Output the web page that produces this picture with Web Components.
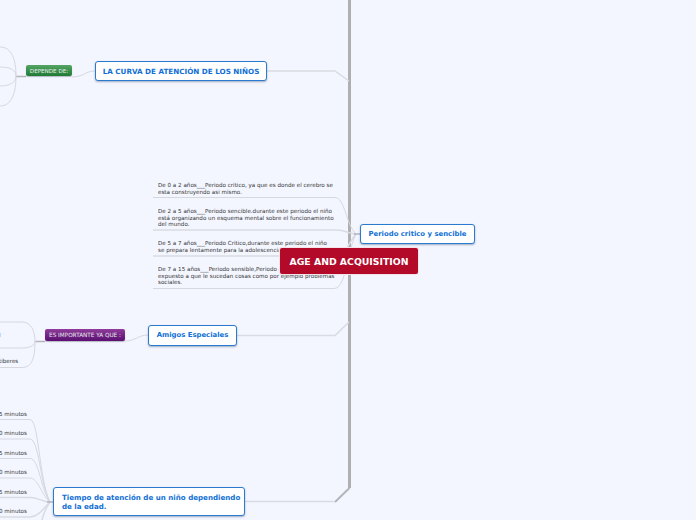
<!DOCTYPE html>
<html lang="es">
<head>
<meta charset="utf-8">
<title>Age and acquisition</title>
<style>
    html, body {
        margin: 0;
        height: 100%;
        overflow: hidden;
        background: #f3f6ff;
    }
</style>
</head>
<body>
<mind-map>
    <map-leaf x="158" y="182">De 0 a 2 años___Periodo critico, ya que es donde el cerebro se<br>esta construyendo asi mismo.</map-leaf>
    <map-leaf x="158" y="208">De 2 a 5 años___Periodo sencible.durante este periodo el niño<br>está organizando un esquema mental sobre el funcionamiento<br>del mundo.</map-leaf>
    <map-leaf x="158" y="240">De 5 a 7 años___Periodo Critico,durante este periodo el niño<br>se prepara lentamente para la adolescencia.</map-leaf>
    <map-leaf x="158" y="266">De 7 a 15 años___Periodo sensible,Periodo en el que el niño esta<br>expuesto a que le sucedan cosas como por ejemplo problemas<br>sociales.</map-leaf>

    <map-leaf x="-1" y="332">l</map-leaf>
    <map-leaf x="-1" y="358">tiberes</map-leaf>
    <map-leaf x="-1" y="411">5 minutos</map-leaf>
    <map-leaf x="-1" y="430">0 minutos</map-leaf>
    <map-leaf x="-1" y="450">5 minutos</map-leaf>
    <map-leaf x="-1" y="469">0 minutos</map-leaf>
    <map-leaf x="-1" y="489">5 minutos</map-leaf>
    <map-leaf x="-1" y="508">0 minutos</map-leaf>

    <map-topic x="95" y="61" w="172" h="20" size="7.2">LA CURVA DE ATENCIÓN DE LOS NIÑOS</map-topic>
    <map-topic x="360" y="224" w="115" h="20" size="6.9">Periodo critico y sencible</map-topic>
    <map-topic x="148" y="325" w="89" h="21" size="6.9">Amigos Especiales</map-topic>
    <map-topic x="53" y="487" w="192" h="29" size="7.1" align="left">Tiempo de atención de un niño dependiendo<br>de la edad.</map-topic>

    <map-tag x="26" y="65" w="46" h="11" size="5.6" color="green">DEPENDE DE:</map-tag>
    <map-tag x="45" y="329" w="80" h="12" size="5.7" color="purple">ES IMPORTANTE YA QUE :</map-tag>

    <map-root x="280" y="248" w="138" h="26">AGE AND ACQUISITION</map-root>
</mind-map>

<script>
    // shared by the nodes: place the host on the canvas from its attributes
    class MapNode extends HTMLElement {
        place() {
            this.style.left = this.getAttribute('x') + 'px';
            this.style.top = this.getAttribute('y') + 'px';
            if (this.hasAttribute('w')) {
                this.style.width = this.getAttribute('w') + 'px';
            }
            if (this.hasAttribute('h')) {
                this.style.height = this.getAttribute('h') + 'px';
            }
        }
    }

    class MindMap extends HTMLElement {
        connectedCallback() {
            this.attachShadow({ mode: 'open' });

            this.shadowRoot.innerHTML = `
                <style>
                    :host {
                        display: block;
                        position: relative;
                        width: 696px;
                        height: 520px;
                        overflow: hidden;
                        background: #f3f6ff;
                        font-family: 'DejaVu Sans', Verdana, sans-serif;
                    }

                    svg {
                        position: absolute;
                        left: 0;
                        top: 0;
                    }

                    .thin {
                        fill: none;
                        stroke: #d6d8e0;
                        stroke-width: 1;
                    }

                    .mid {
                        fill: none;
                        stroke: #d9dbe2;
                        stroke-width: 1.5;
                    }

                    .stub {
                        fill: none;
                        stroke: #b4b5ba;
                        stroke-width: 1.5;
                    }

                    .trunk {
                        fill: none;
                        stroke: #afafb2;
                        stroke-width: 3;
                    }
                </style>

                <svg width="696" height="520" viewBox="0 0 696 520">
                    <!-- trunk -->
                    <path class="trunk" d="M349.5 0 V488"/>
                    <path class="stub" style="stroke-width: 2" d="M349.5 488 L335 502"/>
                    <path class="mid" d="M267 71 H335 L349 81"/>
                    <path class="mid" d="M237 335.500 H335 L349 322"/>
                    <path class="mid" d="M245 501.500 H335"/>

                    <!-- curva branch -->
                    <path class="thin" d="M72 77 C84 77 85 71 95 71"/>
                    <path class="stub" d="M16 76.500 H26"/>
                    <path class="thin" d="M0 47 C12 47 16 60 16 76 M0 67 C10 67 16 70 16 76 M0 86 C10 86 16 82 16 76 M0 106 C12 106 16 92 16 76"/>

                    <!-- periodo branch -->
                    <path class="thin" d="M153 197.500 H335 C345 197.500 346 225 356 234"/>
                    <path class="mid" d="M153 230 H336 C346 230 349 234 356 234"/>
                    <path class="mid" d="M153 256 H336 C346 256 350 240 356 234"/>
                    <path class="thin" d="M153 288.500 H334 C346 288.500 346 255 356 234"/>
                    <path class="stub" d="M354 234 H360"/>

                    <!-- amigos branch -->
                    <path class="thin" d="M125 341 C136 341 138 335 148 335"/>
                    <path class="stub" d="M35 341.500 H45"/>
                    <path class="thin" d="M0 322 H22 C31 322 35 331 35 341 C35 345 31 348 22 348 H0 M35 341 C35 358 32 367.500 22 367.500 H0"/>

                    <!-- tiempo branch -->
                    <path class="thin" d="M0 419.500 H30 C39 419.500 39 480 50 502"/>
                    <path class="thin" d="M0 439 H30 C39 439 40 484 50 502"/>
                    <path class="thin" d="M0 458.500 H30 C39 458.500 41 490 50 502"/>
                    <path class="thin" d="M0 478 H30 C38 478 42 496 50 502"/>
                    <path class="mid" d="M0 497.500 H30 C38 497.500 43 502 50 502"/>
                    <path class="mid" d="M0 517 H30 C38 517 44 508 50 502"/>
                    <path class="mid" d="M42 520 C44 512 47 506 50 502"/>
                    <path class="stub" d="M47 502 H53"/>
                </svg>

                <slot></slot>
            `;
        }
    }

    class MapRoot extends MapNode {
        connectedCallback() {
            this.attachShadow({ mode: 'open' });
            this.place();

            this.shadowRoot.innerHTML = `
                <style>
                    :host {
                        display: flex;
                        position: absolute;
                        align-items: center;
                        justify-content: center;
                        box-sizing: border-box;
                        background: #b20a28;
                        border-radius: 2px;
                        box-shadow: 0 0 0 1px #f4e4e8;
                        color: #fff;
                        font-size: 9.3px;
                        font-weight: 700;
                        white-space: nowrap;
                    }
                </style>
                <slot></slot>
            `;
        }
    }

    class MapTopic extends MapNode {
        connectedCallback() {
            this.attachShadow({ mode: 'open' });
            this.place();

            const left = this.getAttribute('align') === 'left';

            this.shadowRoot.innerHTML = `
                <style>
                    :host {
                        display: flex;
                        position: absolute;
                        align-items: center;
                        justify-content: ${left ? 'flex-start' : 'center'};
                        box-sizing: border-box;
                        padding: 1px ${left ? '8px' : '0'} 0;
                        background: #fff;
                        border: 1px solid #2a7ad0;
                        border-radius: 3px;
                        box-shadow: 0 1px 2px rgba(60, 80, 120, 0.45);
                        color: #0f6fd6;
                        font-size: ${this.getAttribute('size')}px;
                        font-weight: 700;
                        line-height: 9.500px;
                        white-space: nowrap;
                    }
                </style>
                <div><slot></slot></div>
            `;
        }
    }

    class MapTag extends MapNode {
        connectedCallback() {
            this.attachShadow({ mode: 'open' });
            this.place();

            const tones = {
                green: 'linear-gradient(#55a565, #1f7a34)',
                purple: 'linear-gradient(#8f3c9c, #5a0f72)'
            };

            this.shadowRoot.innerHTML = `
                <style>
                    :host {
                        display: flex;
                        position: absolute;
                        align-items: center;
                        justify-content: center;
                        background: ${tones[this.getAttribute('color')]};
                        border-radius: 2px;
                        box-shadow: 0 1px 1px rgba(70, 70, 90, 0.35);
                        color: #e8ecea;
                        font-size: ${this.getAttribute('size')}px;
                        white-space: nowrap;
                    }
                </style>
                <slot></slot>
            `;
        }
    }

    class MapLeaf extends MapNode {
        connectedCallback() {
            this.attachShadow({ mode: 'open' });
            this.place();

            this.shadowRoot.innerHTML = `
                <style>
                    :host {
                        display: block;
                        position: absolute;
                        color: #333;
                        font-size: 5.600px;
                        line-height: 6.500px;
                        white-space: nowrap;
                    }
                </style>
                <slot></slot>
            `;
        }
    }

    customElements.define('mind-map', MindMap);
    customElements.define('map-root', MapRoot);
    customElements.define('map-topic', MapTopic);
    customElements.define('map-tag', MapTag);
    customElements.define('map-leaf', MapLeaf);
</script>
</body>
</html>
